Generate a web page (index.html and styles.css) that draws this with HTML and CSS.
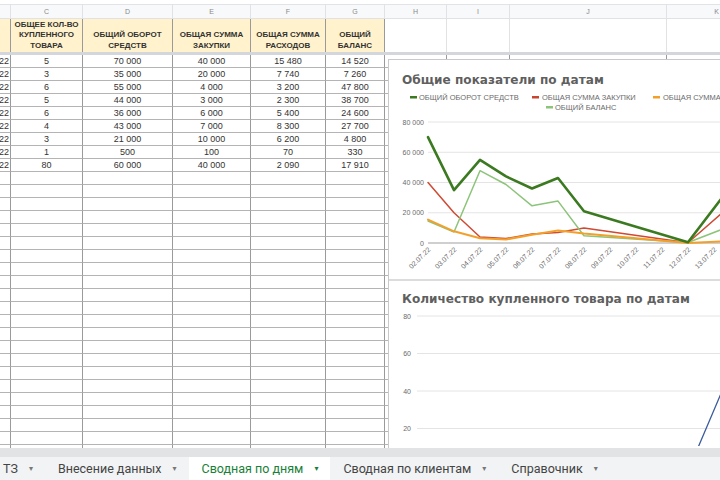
FILE: index.html
```html
<!DOCTYPE html>
<html lang="ru">
<head>
<meta charset="utf-8">
<title>Сводная по дням</title>
<link rel="stylesheet" href="styles.css">
</head>
<body>
<div class="toolbar"></div>
<div class="sheet">
  <div class="grid">
    <div class="col"></div><div class="col">C</div><div class="col">D</div><div class="col">E</div><div class="col">F</div><div class="col">G</div><div class="col">H</div><div class="col">I</div><div class="col">J</div><div class="col">K</div>
    <div class="hd"></div><div class="hd">ОБЩЕЕ КОЛ-ВО КУПЛЕННОГО ТОВАРА</div><div class="hd">ОБЩИЙ ОБОРОТ СРЕДСТВ</div><div class="hd">ОБЩАЯ СУММА ЗАКУПКИ</div><div class="hd">ОБЩАЯ СУММА РАСХОДОВ</div><div class="hd">ОБЩИЙ БАЛАНС</div><div class="hw"></div><div class="hw"></div><div class="hw"></div><div class="hw"></div>
    <div class="freeze"></div>
    <div class="dt">02.07.22</div><div>5</div><div>70 000</div><div>40 000</div><div>15 480</div><div>14 520</div><div></div><div></div><div></div><div></div>
    <div class="dt">03.07.22</div><div>3</div><div>35 000</div><div>20 000</div><div>7 740</div><div>7 260</div><div></div><div></div><div></div><div></div>
    <div class="dt">04.07.22</div><div>6</div><div>55 000</div><div>4 000</div><div>3 200</div><div>47 800</div><div></div><div></div><div></div><div></div>
    <div class="dt">05.07.22</div><div>5</div><div>44 000</div><div>3 000</div><div>2 300</div><div>38 700</div><div></div><div></div><div></div><div></div>
    <div class="dt">06.07.22</div><div>6</div><div>36 000</div><div>6 000</div><div>5 400</div><div>24 600</div><div></div><div></div><div></div><div></div>
    <div class="dt">07.07.22</div><div>4</div><div>43 000</div><div>7 000</div><div>8 300</div><div>27 700</div><div></div><div></div><div></div><div></div>
    <div class="dt">08.07.22</div><div>3</div><div>21 000</div><div>10 000</div><div>6 200</div><div>4 800</div><div></div><div></div><div></div><div></div>
    <div class="dt">12.07.22</div><div>1</div><div>500</div><div>100</div><div>70</div><div>330</div><div></div><div></div><div></div><div></div>
    <div class="dt">13.07.22</div><div>80</div><div>60 000</div><div>40 000</div><div>2 090</div><div>17 910</div><div></div><div></div><div></div><div></div>
    <div></div><div></div><div></div><div></div><div></div><div></div><div></div><div></div><div></div><div></div>
    <div></div><div></div><div></div><div></div><div></div><div></div><div></div><div></div><div></div><div></div>
    <div></div><div></div><div></div><div></div><div></div><div></div><div></div><div></div><div></div><div></div>
    <div></div><div></div><div></div><div></div><div></div><div></div><div></div><div></div><div></div><div></div>
    <div></div><div></div><div></div><div></div><div></div><div></div><div></div><div></div><div></div><div></div>
    <div></div><div></div><div></div><div></div><div></div><div></div><div></div><div></div><div></div><div></div>
    <div></div><div></div><div></div><div></div><div></div><div></div><div></div><div></div><div></div><div></div>
    <div></div><div></div><div></div><div></div><div></div><div></div><div></div><div></div><div></div><div></div>
    <div></div><div></div><div></div><div></div><div></div><div></div><div></div><div></div><div></div><div></div>
    <div></div><div></div><div></div><div></div><div></div><div></div><div></div><div></div><div></div><div></div>
    <div></div><div></div><div></div><div></div><div></div><div></div><div></div><div></div><div></div><div></div>
    <div></div><div></div><div></div><div></div><div></div><div></div><div></div><div></div><div></div><div></div>
    <div></div><div></div><div></div><div></div><div></div><div></div><div></div><div></div><div></div><div></div>
    <div></div><div></div><div></div><div></div><div></div><div></div><div></div><div></div><div></div><div></div>
    <div></div><div></div><div></div><div></div><div></div><div></div><div></div><div></div><div></div><div></div>
    <div></div><div></div><div></div><div></div><div></div><div></div><div></div><div></div><div></div><div></div>
    <div></div><div></div><div></div><div></div><div></div><div></div><div></div><div></div><div></div><div></div>
    <div></div><div></div><div></div><div></div><div></div><div></div><div></div><div></div><div></div><div></div>
    <div></div><div></div><div></div><div></div><div></div><div></div><div></div><div></div><div></div><div></div>
    <div></div><div></div><div></div><div></div><div></div><div></div><div></div><div></div><div></div><div></div>
    <div></div><div></div><div></div><div></div><div></div><div></div><div></div><div></div><div></div><div></div>
    <div></div><div></div><div></div><div></div><div></div><div></div><div></div><div></div><div></div><div></div>
  </div>

  <div class="charts">
    <div class="chart chart1">
      <svg class="plot" width="340" height="221" viewBox="0 0 340 221">
        <g transform="translate(-1,-1)">
          <text class="ttl" x="14" y="25">Общие показатели по датам</text>
          <rect x="22" y="37" width="7" height="2.5" fill="#3b7a20"/>
          <text class="lg" x="31" y="40.5">ОБЩИЙ ОБОРОТ СРЕДСТВ</text>
          <rect x="144" y="37" width="7" height="2.5" fill="#c9452f"/>
          <text class="lg" x="154" y="40.5">ОБЩАЯ СУММА ЗАКУПКИ</text>
          <rect x="265" y="37" width="7" height="2.5" fill="#f3a02b"/>
          <text class="lg" x="275" y="40.5">ОБЩАЯ СУММА РАСХОДОВ</text>
          <rect x="158" y="47" width="7" height="2.5" fill="#8cc47a"/>
          <text class="lg" x="167" y="50.5">ОБЩИЙ БАЛАНС</text>

          <g class="grd">
            <line x1="40" y1="63" x2="345" y2="63"/>
            <line x1="40" y1="93.25" x2="345" y2="93.25"/>
            <line x1="40" y1="123.5" x2="345" y2="123.5"/>
            <line x1="40" y1="153.75" x2="345" y2="153.75"/>
          </g>
          <line class="axis" x1="40" y1="184" x2="345" y2="184"/>
          <g class="yl">
            <text x="36" y="65.5">80 000</text>
            <text x="36" y="95.7">60 000</text>
            <text x="36" y="126">40 000</text>
            <text x="36" y="156.2">20 000</text>
            <text x="36" y="186.5">0</text>
          </g>

          <polyline class="s-red" points="40,123.5 66,153.75 92,178 118,179.5 144,174.9 170,173.4 196,168.9 300,183.8 369,123.5"/>
          <polyline class="s-lgreen" points="40,162 66,173 92,111.7 118,125.5 144,146.8 170,142.1 196,176.7 300,183.5 369,156.9"/>
          <polyline class="s-orange" points="40,160.6 66,172.3 92,179.2 118,180.5 144,175.8 170,171.4 196,174.6 300,183.9 369,180.8"/>
          <polyline class="s-green" points="40,78.1 66,131.1 92,100.8 118,117.4 144,129.5 170,119 196,152.2 300,183.2 369,93.25"/>

          <g class="xl">
            <text x="43" y="191" transform="rotate(-45 43 191)">02.07.22</text>
            <text x="69" y="191" transform="rotate(-45 69 191)">03.07.22</text>
            <text x="95" y="191" transform="rotate(-45 95 191)">04.07.22</text>
            <text x="121" y="191" transform="rotate(-45 121 191)">05.07.22</text>
            <text x="147" y="191" transform="rotate(-45 147 191)">06.07.22</text>
            <text x="173" y="191" transform="rotate(-45 173 191)">07.07.22</text>
            <text x="199" y="191" transform="rotate(-45 199 191)">08.07.22</text>
            <text x="225" y="191" transform="rotate(-45 225 191)">09.07.22</text>
            <text x="251" y="191" transform="rotate(-45 251 191)">10.07.22</text>
            <text x="277" y="191" transform="rotate(-45 277 191)">11.07.22</text>
            <text x="303" y="191" transform="rotate(-45 303 191)">12.07.22</text>
            <text x="329" y="191" transform="rotate(-45 329 191)">13.07.22</text>
          </g>
        </g>
      </svg>
    </div>
    <div class="chart chart2">
      <svg class="plot" width="340" height="165" viewBox="0 0 340 165">
        <g transform="translate(-1,0)">
          <text class="ttl" x="14" y="22">Количество купленного товара по датам</text>
          <g class="grd">
            <line x1="29" y1="35" x2="345" y2="35"/>
            <line x1="29" y1="72.5" x2="345" y2="72.5"/>
            <line x1="29" y1="110" x2="345" y2="110"/>
            <line x1="29" y1="147.5" x2="345" y2="147.5"/>
          </g>
          <g class="yl">
            <text x="23" y="37.5">80</text>
            <text x="23" y="75">60</text>
            <text x="23" y="112.5">40</text>
            <text x="23" y="150">20</text>
          </g>
          <polyline class="s-blue" points="29,175.6 56.4,179.4 83.8,173.75 111.2,175.6 138.6,173.75 166,177.5 193.4,179.4 303,183.1 366,35"/>
        </g>
      </svg>
    </div>
  </div>
</div>
<div class="hscroll"></div>
<div class="tabs">
  <div class="tab first"><span>ТЗ</span><span class="arr">▾</span></div>
  <div class="tab"><span>Внесение данных</span><span class="arr">▾</span></div>
  <div class="tab active"><span>Сводная по дням</span><span class="arr">▾</span></div>
  <div class="tab"><span>Сводная по клиентам</span><span class="arr">▾</span></div>
  <div class="tab"><span>Справочник</span><span class="arr">▾</span></div>
</div>
</body>
</html>
```
FILE: styles.css
```css
* { box-sizing: border-box; }
html, body { margin: 0; padding: 0; }
body {
  width: 720px;
  height: 480px;
  overflow: hidden;
  background: #fff;
  font-family: "Liberation Sans", Arial, sans-serif;
  display: flex;
  flex-direction: column;
}
.toolbar {
  flex: none;
  height: 5px;
  background: #fff;
  border-bottom: 1px solid #e1e3e6;
}
.sheet {
  flex: 1;
  position: relative;
  overflow: hidden;
}
.grid {
  display: grid;
  grid-template-columns: 11px 72px 90px 78px 75px 59px 62px 63px 157px 100px;
  grid-template-rows: 14px 33px 3px;
  grid-auto-rows: 13px;
  width: 767px;
}
.grid > div {
  border-right: 1px solid #9a9a9a;
  border-bottom: 1px solid #b4b4b4;
  font-size: 9px;
  color: #333;
  display: flex;
  align-items: center;
  justify-content: center;
  overflow: hidden;
  white-space: nowrap;
}
.grid > .col {
  background: #f8f9fa;
  border-right: 1px solid #e0e2e5;
  border-bottom: 1px solid #e0e2e5;
  color: #8a8a8a;
  font-size: 7px;
}
.grid > .hd {
  background: #fff2cc;
  font-weight: bold;
  font-size: 8px;
  line-height: 10.5px;
  text-align: center;
  white-space: normal;
  color: #333;
  border-bottom: none;
  align-items: flex-end;
  padding-bottom: 1px;
}
.grid > .hw {
  background: #fff;
  border-right-color: #e2e2e2;
  border-bottom: none;
}
.grid > .freeze {
  grid-column: 1 / -1;
  background: #d3d6da;
  border: none;
}
.grid > .dt {
  justify-content: flex-end;
  padding-right: 1px;
}
.charts {
  position: absolute;
  left: 388px;
  top: 54px;
  width: 340px;
  height: 389px;
  background: #fff;
  border-top: 1px solid #c9c9c9;
  border-left: 1px solid #c9c9c9;
  display: flex;
  flex-direction: column;
}
.chart { background: #fff; overflow: hidden; }
.chart1 { height: 221px; flex: none; border-bottom: 2px solid #dcdcdc; }
.chart2 { flex: 1; }
.plot { display: block; }
.ttl {
  font-family: "DejaVu Sans", sans-serif;
  font-weight: bold;
  font-size: 12.1px;
  fill: #5f5f5f;
}
.lg {
  font-family: "Liberation Sans", Arial, sans-serif;
  font-size: 7.5px;
  fill: #6a6a6a;
}
.grd line { stroke: #e4e4e4; stroke-width: 1; }
.axis { stroke: #a0a0a0; stroke-width: 1.2; }
.yl text {
  font-family: "Liberation Sans", Arial, sans-serif;
  font-size: 7px;
  fill: #6a6a6a;
  text-anchor: end;
}
.xl text {
  font-family: "Liberation Sans", Arial, sans-serif;
  font-size: 7px;
  fill: #6a6a6a;
  text-anchor: end;
}
polyline { fill: none; stroke-linejoin: round; stroke-linecap: round; }
.s-green { stroke: #3b7a20; stroke-width: 2.6; }
.s-red { stroke: #cf4a33; stroke-width: 1.5; }
.s-orange { stroke: #f3a02b; stroke-width: 2; }
.s-lgreen { stroke: #8cc47a; stroke-width: 1.5; }
.s-blue { stroke: #3b5b9c; stroke-width: 1.3; }
.hscroll {
  flex: none;
  height: 9px;
  background: #e2e3e5;
}
.tabs {
  flex: none;
  height: 23px;
  background: #f1f3f4;
  display: flex;
  align-items: stretch;
  font-family: Roboto, "Liberation Sans", sans-serif;
  font-size: 12.5px;
  color: #444;
}
.tab {
  display: flex;
  align-items: center;
  gap: 11px;
  padding: 0 12px 0 13px;
}
.tab.first { margin-left: -10px; }
.tab.active {
  background: #fff;
  color: #188038;
}
.arr {
  font-family: "DejaVu Sans", sans-serif;
  font-size: 8px;
  color: #777;
}
.tab.active .arr { color: #188038; }
```
